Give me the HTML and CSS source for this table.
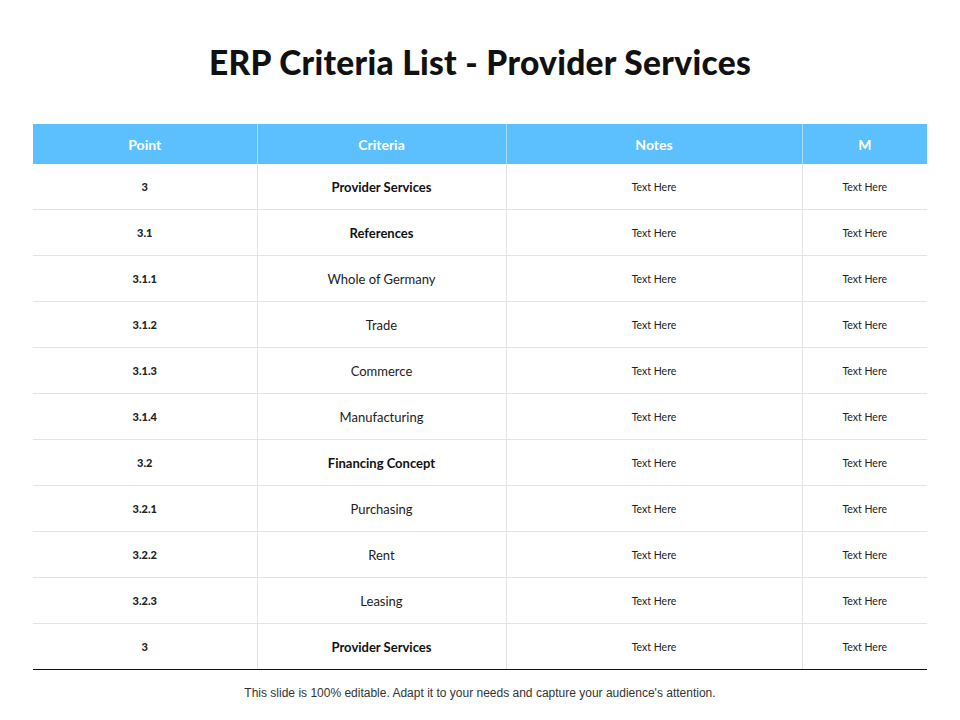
FILE: index.html
```html
<!DOCTYPE html>
<html>
<head>
<meta charset="utf-8">
<link rel="stylesheet" href="styles.css">
</head>
<body>
<div class="slide">
  <h1 class="title">ERP Criteria List - Provider Services</h1>
  <table class="grid">
    <colgroup>
      <col class="c1"><col class="c2"><col class="c3"><col class="c4">
    </colgroup>
    <thead>
      <tr><th>Point</th><th>Criteria</th><th>Notes</th><th>M</th></tr>
    </thead>
    <tbody>
      <tr><td class="pt">3</td><td class="cr b">Provider Services</td><td class="tx">Text Here</td><td class="tx">Text Here</td></tr>
      <tr><td class="pt">3.1</td><td class="cr b">References</td><td class="tx">Text Here</td><td class="tx">Text Here</td></tr>
      <tr><td class="pt">3.1.1</td><td class="cr">Whole of Germany</td><td class="tx">Text Here</td><td class="tx">Text Here</td></tr>
      <tr><td class="pt">3.1.2</td><td class="cr">Trade</td><td class="tx">Text Here</td><td class="tx">Text Here</td></tr>
      <tr><td class="pt">3.1.3</td><td class="cr">Commerce</td><td class="tx">Text Here</td><td class="tx">Text Here</td></tr>
      <tr><td class="pt">3.1.4</td><td class="cr">Manufacturing</td><td class="tx">Text Here</td><td class="tx">Text Here</td></tr>
      <tr><td class="pt">3.2</td><td class="cr b">Financing Concept</td><td class="tx">Text Here</td><td class="tx">Text Here</td></tr>
      <tr><td class="pt">3.2.1</td><td class="cr">Purchasing</td><td class="tx">Text Here</td><td class="tx">Text Here</td></tr>
      <tr><td class="pt">3.2.2</td><td class="cr">Rent</td><td class="tx">Text Here</td><td class="tx">Text Here</td></tr>
      <tr><td class="pt">3.2.3</td><td class="cr">Leasing</td><td class="tx">Text Here</td><td class="tx">Text Here</td></tr>
      <tr class="last"><td class="pt">3</td><td class="cr b">Provider Services</td><td class="tx">Text Here</td><td class="tx">Text Here</td></tr>
    </tbody>
  </table>
  <p class="foot">This slide is 100% editable. Adapt it to your needs and capture your audience's attention.</p>
</div>
</body>
</html>
```

FILE: styles.css
```css
html, body {
  margin: 0;
  padding: 0;
  background: #ffffff;
}
.slide {
  width: 960px;
  height: 720px;
  display: flex;
  flex-direction: column;
  align-items: center;
  font-family: Lato, "Noto Sans", sans-serif;
}
.title {
  margin: 41px 0 0 0;
  height: 42px;
  line-height: 42px;
  font-size: 33.5px;
  font-weight: 900;
  color: #111111;
  letter-spacing: 0.3px;
}
.grid {
  margin-top: 41px;
  width: 894px;
  border-collapse: collapse;
  table-layout: fixed;
}
.c1 { width: 224px; }
.c2 { width: 249px; }
.c3 { width: 296px; }
.c4 { width: 125px; }
.grid th {
  height: 40px;
  padding: 0;
  background: #5bc0fd;
  color: #ffffff;
  font-size: 14px;
  font-weight: 700;
  text-align: center;
  border-left: 1px solid #a8defd;
}
.grid th:first-child { border-left: none; }
.grid td {
  height: 45px;
  padding: 0;
  text-align: center;
  border-top: 1px solid #e3e3e3;
  border-left: 1px solid #e3e3e3;
  color: #222222;
}
.grid tbody tr:first-child td { border-top: none; }
.grid td:first-child { border-left: none; }
.grid tr.last td { border-bottom: 1.5px solid #111111; }
.pt {
  font-size: 11px;
  font-weight: 900;
  color: #111111;
}
.cr {
  font-size: 13px;
  font-weight: 400;
  color: #333333;
}
.cr.b {
  font-weight: 700;
  color: #111111;
}
.tx {
  font-size: 10.5px;
  color: #333333;
}
.foot {
  margin: 16px 0 0 0;
  font-family: "Liberation Sans", Arial, sans-serif;
  font-size: 12px;
  color: #333333;
}
```
